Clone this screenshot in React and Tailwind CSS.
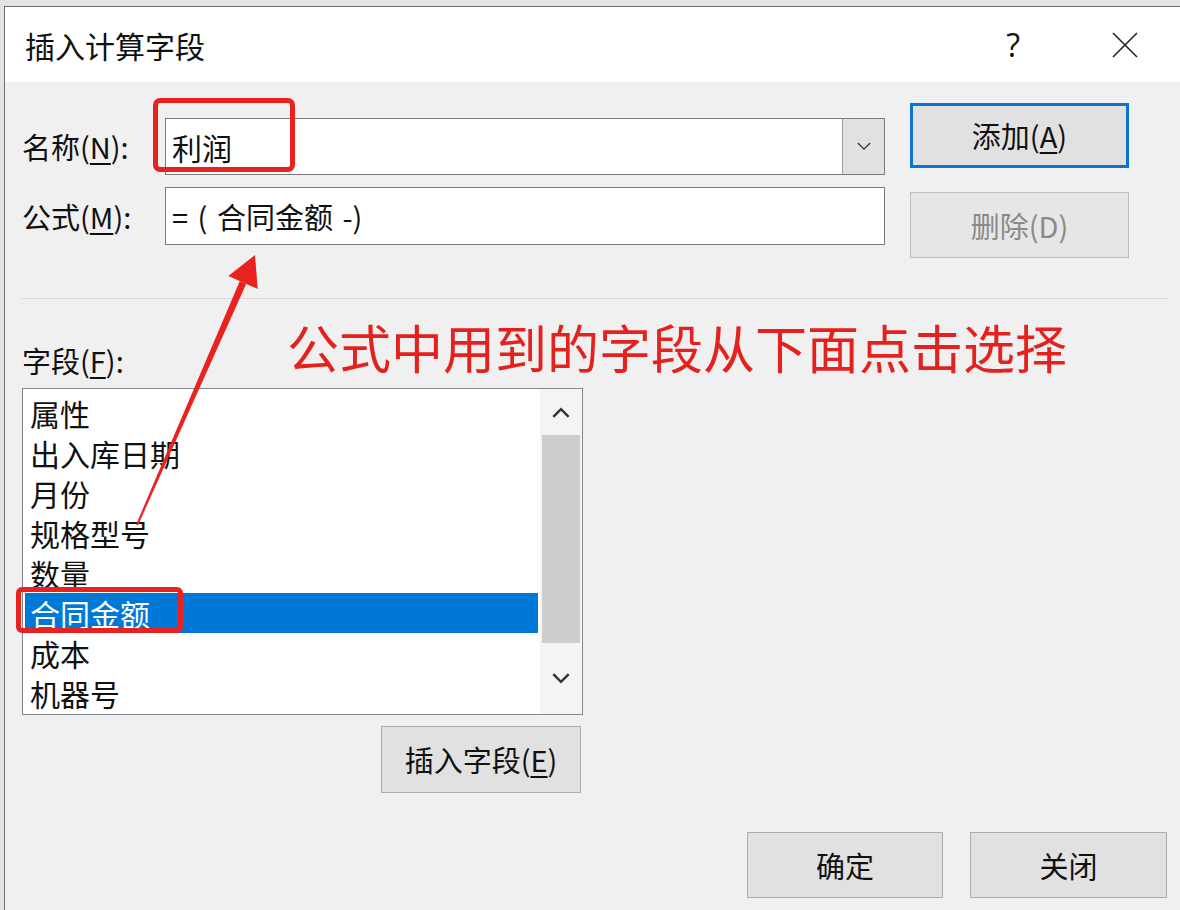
import React from "react";

const fields = ["属性", "出入库日期", "月份", "规格型号", "数量", "合同金额", "成本", "机器号"];

function Chevron({ up, className, width = 2 }) {
  return (
    <svg viewBox="0 0 16 10" className={className} fill="none" stroke="currentColor" strokeWidth={width}>
      {up ? <path d="M1 9 L8 2 L15 9" /> : <path d="M1 1 L8 8 L15 1" />}
    </svg>
  );
}

function Button({ children, className = "", border = "border border-[#adadad]", disabled }) {
  return (
    <div
      className={`flex items-center justify-center bg-[#e1e1e1] text-[29px] leading-none ${border} ${
        disabled ? "text-[#8a8a8a]" : "text-[#111]"
      } ${className}`}
    >
      {children}
    </div>
  );
}

export default function App() {
  return (
    <div className="relative w-[1180px] h-[910px] overflow-hidden bg-[#e4e4e4] pt-[6px] pl-[4px] font-['Noto_Sans_CJK_SC','Microsoft_YaHei',sans-serif] text-[#111]">
      {/* dialog */}
      <div className="h-full flex flex-col border-l border-t border-[#6e6e6e] bg-[#f0f0f0]">
        {/* title bar */}
        <div className="h-[75px] shrink-0 bg-white flex items-center pl-[20px]">
          <span className="text-[30px] leading-none">插入计算字段</span>
          <span className="ml-auto text-[32px] leading-none font-['Open_Sans',sans-serif]">?</span>
          <svg viewBox="0 0 26 26" className="w-[26px] h-[26px] ml-[92px] mr-[42px]" stroke="#222" strokeWidth="1.6">
            <path d="M1 1 L25 25 M25 1 L1 25" />
          </svg>
        </div>

        {/* body */}
        <div className="flex-1 flex flex-col pl-[17px]">
          <div className="flex items-start">
            <div className="w-[863px] pt-[36px]">
              <div className="flex items-center h-[57px]">
                <div className="w-[143px] text-[29px] leading-none">
                  名称(<u className="underline-offset-4">N</u>):
                </div>
                <div className="flex-1 h-full flex bg-white border border-[#7a7a7a]">
                  <div className="flex-1 flex items-center pl-[6px] text-[30px] leading-none">利润</div>
                  <div className="w-[42px] flex items-center justify-center bg-[#e1e1e1] border-l border-[#a0a0a0] text-[#333]">
                    <Chevron className="w-[14px] h-[9px]" width={1.5} />
                  </div>
                </div>
              </div>
              <div className="flex items-center h-[58px] mt-[12px]">
                <div className="w-[143px] text-[29px] leading-none">
                  公式(<u className="underline-offset-4">M</u>):
                </div>
                <div className="flex-1 h-full flex items-center pl-[6px] bg-white border border-[#7a7a7a] text-[29px] leading-none [word-spacing:3px]">
                  = ( 合同金额 -)
                </div>
              </div>
            </div>
            <div className="w-[219px] ml-[25px] pt-[21px] flex flex-col">
              <Button className="h-[65px]" border="border-[3px] border-[#0a74d1]">
                添加(<u className="underline-offset-4">A</u>)
              </Button>
              <Button disabled className="h-[66px] mt-[24px] bg-[#e6e6e6]" border="border border-[#bcbcbc]">
                删除(D)
              </Button>
            </div>
          </div>

          <div className="mt-[40px] mr-[12px] h-px bg-[#d9d9d9]" />

          <div className="mt-[41px] h-[40px] flex items-center text-[29px] leading-none">
            字段(<u className="underline-offset-4">F</u>):
          </div>

          <div className="w-[561px] mt-[8px] flex flex-col">
            <div className="h-[327px] flex bg-white border border-[#828790]">
              <div className="flex-1 px-[2px] pt-[4px]">
                {fields.map((f) => (
                  <div
                    key={f}
                    className={`h-[40px] flex items-center pl-[5px] text-[30px] leading-none ${
                      f === "合同金额" ? "bg-[#0078d7] text-white" : ""
                    }`}
                  >
                    {f}
                  </div>
                ))}
              </div>
              <div className="w-[42px] flex flex-col bg-[#f4f4f4]">
                <div className="h-[46px] flex items-center justify-center text-[#333]">
                  <Chevron up className="w-[18px] h-[11px]" width={2.2} />
                </div>
                <div className="h-[208px] mx-[2px] bg-[#cdcdcd]" />
                <div className="flex-1 flex items-center justify-center text-[#333]">
                  <Chevron className="w-[18px] h-[11px]" width={2.2} />
                </div>
              </div>
            </div>
            <Button className="self-end mr-[2px] mt-[11px] w-[200px] h-[67px]">
              插入字段(<u className="underline-offset-4">E</u>)
            </Button>
          </div>

          <div className="mt-[39px] flex justify-end gap-[27px] pr-[13px]">
            <Button className="w-[196px] h-[66px]">确定</Button>
            <Button className="w-[197px] h-[66px]">关闭</Button>
          </div>
        </div>
      </div>

      {/* red annotations */}
      <div className="absolute left-[153px] top-[98px] w-[142px] h-[74px] border-[5px] border-[#e8231f] rounded-[7px] pointer-events-none" />
      <div className="absolute left-[16px] top-[587px] w-[167px] h-[46px] border-[5px] border-[#e8231f] rounded-[6px] pointer-events-none" />
      <div className="absolute left-[287px] top-[321px] text-[52px] leading-none text-[#e4211d] whitespace-nowrap pointer-events-none">
        公式中用到的字段从下面点击选择
      </div>
      <svg className="absolute left-0 top-0 w-[1180px] h-[910px] pointer-events-none" viewBox="0 0 1180 910">
        <polygon points="136.1,524.6 137.9,525.4 246.2,283.9 239.8,281.1" fill="#e8231f" />
        <polygon points="255,255 257.7,288.9 228.3,276.1" fill="#e8231f" />
      </svg>
    </div>
  );
}
